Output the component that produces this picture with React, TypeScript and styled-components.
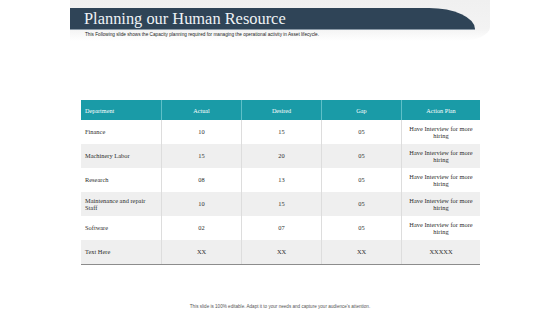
import React from "react";
import styled, { createGlobalStyle } from "styled-components";

const GlobalStyle = createGlobalStyle`
  html, body {
    margin: 0;
    padding: 0;
    background: #ffffff;
  }
`;

type Row = {
  dept: string;
  actual: string;
  desired: string;
  gap: string;
  plan: string;
};

const rows: Row[] = [
  { dept: "Finance", actual: "10", desired: "15", gap: "05", plan: "Have Interview for more hiring" },
  { dept: "Machinery Labor", actual: "15", desired: "20", gap: "05", plan: "Have Interview for more hiring" },
  { dept: "Research", actual: "08", desired: "13", gap: "05", plan: "Have Interview for more hiring" },
  { dept: "Maintenance and repair Staff", actual: "10", desired: "15", gap: "05", plan: "Have Interview for more hiring" },
  { dept: "Software", actual: "02", desired: "07", gap: "05", plan: "Have Interview for more hiring" },
  { dept: "Text Here", actual: "XX", desired: "XX", gap: "XX", plan: "XXXXX" },
];

const headings = ["Department", "Actual", "Desired", "Gap", "Action Plan"];

export default function App() {
  return (
    <>
      <GlobalStyle />
      <Slide>
        <HeaderBand>
          <TitleBar>
            <Title>Planning our Human Resource</Title>
          </TitleBar>
        </HeaderBand>
        <Subtitle>
          This Following slide shows the Capacity planning required for managing the operational activity in Asset lifecycle.
        </Subtitle>
        <Table>
          <HeadRow>
            {headings.map((h, i) => (
              <HeadCell key={h} $left={i === 0}>
                {h}
              </HeadCell>
            ))}
          </HeadRow>
          {rows.map((r, i) => (
            <BodyRow key={r.dept} $shaded={i % 2 === 1} $last={i === rows.length - 1}>
              <Cell $left>{r.dept}</Cell>
              <Cell>{r.actual}</Cell>
              <Cell>{r.desired}</Cell>
              <Cell>{r.gap}</Cell>
              <Cell>{r.plan}</Cell>
            </BodyRow>
          ))}
        </Table>
        <Footer>This slide is 100% editable. Adapt it to your needs and capture your audience's attention.</Footer>
      </Slide>
    </>
  );
}

const Slide = styled.div`
  width: 560px;
  height: 315px;
  background: #ffffff;
  display: flex;
  flex-direction: column;
  align-items: flex-start;
  overflow: hidden;
`;

const HeaderBand = styled.div`
  width: 420px;
  margin-left: 70px;
  padding: 8px 15px 0 0;
  box-sizing: border-box;
  background: linear-gradient(#f0f0f0, #f3f3f3 70%, #ffffff);
  border-bottom-right-radius: 30px 14px;
  height: 41px;
`;

const TitleBar = styled.div`
  height: 21px;
  background: #2f4457;
  border-top-right-radius: 46px 21px;
  display: flex;
  align-items: center;
  padding-left: 14px;
  border-bottom: 1px solid #8a99a6;
`;

const Title = styled.h1`
  margin: 0;
  font-family: "Liberation Serif", "DejaVu Serif", serif;
  font-weight: normal;
  font-size: 16.4px;
  color: #eef2f5;
  white-space: nowrap;
`;

const Subtitle = styled.p`
  margin: -9px 0 0 85px;
  font-family: "Liberation Sans", Arial, sans-serif;
  font-size: 4.7px;
  color: #222;
  white-space: nowrap;
`;

const Table = styled.div`
  margin: 63px 0 0 81px;
  width: 399px;
  display: flex;
  flex-direction: column;
`;

const HeadRow = styled.div`
  display: grid;
  grid-template-columns: 80px 80px 80px 80px 79px;
  height: 20px;
  background: #1a9ba7;
`;

const HeadCell = styled.div<{ $left?: boolean }>`
  display: flex;
  align-items: center;
  justify-content: ${(p) => (p.$left ? "flex-start" : "center")};
  padding-left: ${(p) => (p.$left ? "4px" : "0")};
  font-family: "Liberation Serif", "DejaVu Serif", serif;
  font-size: 6.2px;
  color: #ffffff;
  border-left: 1px solid #5fc0c8;
  &:first-child {
    border-left: none;
  }
`;

const BodyRow = styled.div<{ $shaded: boolean; $last: boolean }>`
  display: grid;
  grid-template-columns: 80px 80px 80px 80px 79px;
  height: 24px;
  background: ${(p) => (p.$shaded ? "#efefef" : "#ffffff")};
  border-bottom: ${(p) => (p.$last ? "1px solid #8c8c8c" : "none")};
`;

const Cell = styled.div<{ $left?: boolean }>`
  display: flex;
  align-items: center;
  justify-content: ${(p) => (p.$left ? "flex-start" : "center")};
  text-align: ${(p) => (p.$left ? "left" : "center")};
  padding: ${(p) => (p.$left ? "0 14px 0 4px" : "0 2px")};
  font-family: "Liberation Serif", "DejaVu Serif", serif;
  font-size: 6.4px;
  line-height: 7.5px;
  color: #2e2e2e;
  border-left: 1px solid #dddddd;
  &:first-child {
    border-left: none;
  }
`;

const Footer = styled.div`
  margin: auto 0 6px 0;
  align-self: center;
  font-family: "Liberation Sans", Arial, sans-serif;
  font-size: 4.6px;
  color: #555;
`;
